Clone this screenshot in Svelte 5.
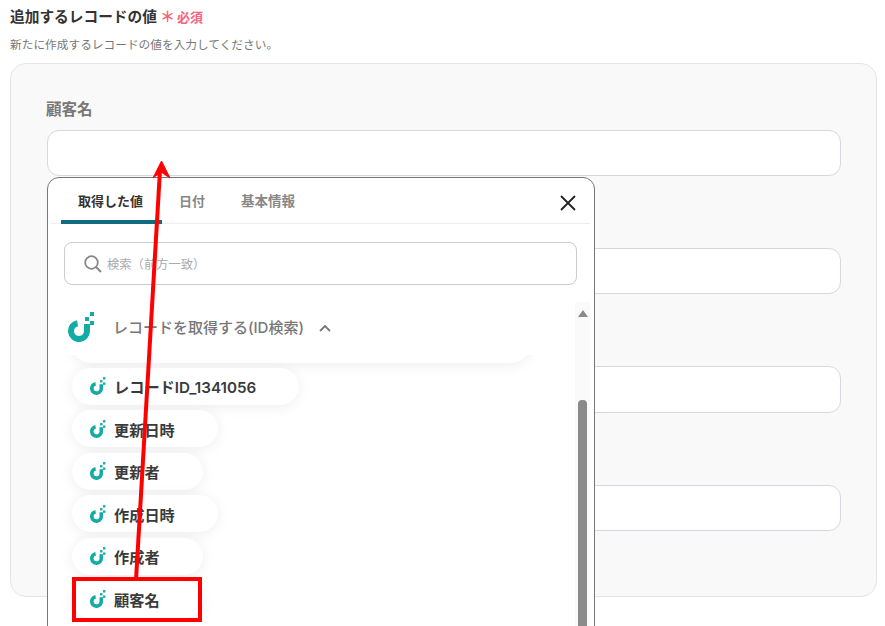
<script>
  const tabs = ['取得した値', '日付', '基本情報'];
  const chips = [
    { label: 'レコードID_1341056' },
    { label: '更新日時' },
    { label: '更新者' },
    { label: '作成日時' },
    { label: '作成者' },
    { label: '顧客名' }
  ];
</script>

{#snippet logo(cls)}
  <svg class={cls} viewBox="0 0 27 30" aria-hidden="true">
    <path d="M9.500 11.200A8 8 0 1 0 19 19V12" fill="none" stroke="currentColor" stroke-width="6" />
    <rect x="22" y="0" width="4" height="4" fill="currentColor" />
    <rect x="17" y="5" width="4" height="4" fill="currentColor" />
    <rect x="22" y="9" width="4" height="4" fill="currentColor" />
  </svg>
{/snippet}

<div class="page">
  <header class="head">
    <h2>追加するレコードの値<span class="req"><span class="star">＊</span>必須</span></h2>
    <p>新たに作成するレコードの値を入力してください。</p>
  </header>

  <section class="panel">
    <div class="label">顧客名</div>
    <div class="fields">
      <div class="input"></div>
      <div class="input"></div>
      <div class="input"></div>
      <div class="input"></div>
    </div>
  </section>

  <div class="popup">
    <div class="tabs">
      {#each tabs as t, i}
        <div class="tab" class:active={i === 0}>{t}</div>
      {/each}
      <svg class="close" viewBox="0 0 16 16" aria-hidden="true">
        <path d="M1 1L15 15M15 1L1 15" stroke="#222" stroke-width="1.8" fill="none" />
      </svg>
    </div>
    <div class="search">
      <svg viewBox="0 0 18 18" aria-hidden="true">
        <circle cx="7.500" cy="7.500" r="6.300" fill="none" stroke="#888" stroke-width="1.8" />
        <path d="M12 12L17 17" stroke="#888" stroke-width="2" fill="none" />
      </svg>
      <span>検索（前方一致）</span>
    </div>
    <div class="body">
      <div class="main">
        <div class="group">
          {@render logo('logo-lg')}
          <span>レコードを取得する(ID検索)</span>
          <svg class="chev" viewBox="0 0 12 8" aria-hidden="true">
            <path d="M1 7L6 2L11 7" fill="none" stroke="#777" stroke-width="1.8" />
          </svg>
        </div>
        <div class="list">
          <div class="chip cut"></div>
          {#each chips as c}
            <div class="chip">
              {@render logo('logo-sm')}
              <span>{c.label}</span>
            </div>
          {/each}
        </div>
      </div>
      <div class="track">
        <div class="up"></div>
        <div class="thumb"></div>
      </div>
    </div>
  </div>

  <div class="mark"></div>
  <svg class="arrow" viewBox="0 0 885 626" aria-hidden="true">
    <path d="M136 580L160 170" stroke="#f00" stroke-width="4" fill="none" />
    <path d="M153 178L161.500 161L170 178L161 172Z" fill="#f00" stroke="#f00" stroke-width="1" />
  </svg>
</div>

<style>
  :global(body) {
    margin: 0;
    background: #fff;
  }
  .page {
    position: relative;
    width: 885px;
    height: 626px;
    overflow: hidden;
    font-family: Inter, "Noto Sans CJK JP", sans-serif;
    color: #333;
  }
  .head {
    padding: 7px 0 0 10px;
  }
  h2 {
    margin: 0;
    font-size: 14.700px;
    line-height: 20px;
    font-weight: 700;
    color: #333;
    display: flex;
    align-items: center;
  }
  .req {
    color: #f4647c;
    font-size: 13px;
    margin-left: 3px;
    display: flex;
    align-items: center;
  }
  .star {
    font-size: 15px;
    width: 17px;
  }
  p {
    margin: 10px 0 0;
    font-size: 11.700px;
    line-height: 17px;
    color: #777;
  }
  .panel {
    box-sizing: border-box;
    margin: 9px 8px 0 10px;
    height: 534px;
    background: #f9f9fa;
    border: 1px solid #e4e5e8;
    border-radius: 16px;
    padding: 34px 35px 0;
  }
  .label {
    font-size: 15.500px;
    line-height: 24px;
    font-weight: 700;
    color: #777;
    margin-bottom: 7.500px;
  }
  .fields {
    display: flex;
    flex-direction: column;
    gap: 71.900px;
    margin-left: 1px;
  }
  .input {
    box-sizing: border-box;
    height: 46.500px;
    background: #fff;
    border: 1px solid #d5d8de;
    border-radius: 12px;
  }
  .popup {
    position: absolute;
    z-index: 1;
    left: 47px;
    top: 177px;
    box-sizing: border-box;
    width: 548px;
    height: 480px;
    background: #fff;
    border: 1px solid #777;
    border-radius: 12px;
    padding: 0 4px 0 3px;
  }
  .tabs {
    position: relative;
    display: flex;
    height: 46px;
    padding-left: 10px;
    border-bottom: 1px solid #eee;
    box-sizing: border-box;
  }
  .tab {
    font-size: 13px;
    line-height: 46px;
    font-weight: 700;
    color: #888;
    padding: 0 17px;
  }
  .tab:last-of-type {
    font-size: 13.500px;
    padding-left: 19px;
  }
  .tab.active {
    color: #333;
    width: 101px;
    box-sizing: border-box;
    border-bottom: 4px solid #0f6b80;
    border-radius: 3px 3px 0 0;
    height: 46px;
  }
  .close {
    position: absolute;
    right: 14px;
    top: 17px;
    width: 16px;
    height: 16px;
  }
  .search {
    box-sizing: border-box;
    margin: 18px 13px 0 13px;
    height: 43px;
    border: 1px solid #ccc;
    border-radius: 8px;
    display: flex;
    align-items: center;
    gap: 5px;
    padding-left: 19px;
    font-size: 12.300px;
    color: #aaa;
  }
  .search svg {
    width: 18px;
    height: 18px;
  }
  .body {
    display: flex;
    margin-top: 17px;
  }
  .main {
    flex: 1;
    min-width: 0;
    height: 400px;
  }
  .group {
    position: relative;
    z-index: 1;
    box-sizing: border-box;
    height: 53px;
    padding: 0 0 4px 17px;
    background: #fff;
    display: flex;
    align-items: center;
    font-size: 15px;
    font-weight: 500;
    color: #777;
  }
  .logo-lg {
    width: 27px;
    height: 30px;
    color: #12aca4;
    margin-right: 18px;
  }
  .chev {
    width: 12px;
    height: 8px;
    margin-left: 15px;
    margin-top: 2px;
  }
  .list {
    display: flex;
    flex-direction: column;
    align-items: flex-start;
    gap: 5.600px;
    padding-left: 21px;
    margin-top: -29px;
  }
  .chip {
    box-sizing: border-box;
    height: 37px;
    min-width: 130px;
    background: #fff;
    border-radius: 19px;
    padding: 0 43px 0 18px;
    display: flex;
    align-items: center;
    gap: 8px;
    font-size: 15.200px;
    font-weight: 600;
    color: #3a3a3a;
    box-shadow: 0 2px 14px rgba(0, 0, 0, 0.07);
  }
  .chip.cut {
    width: 458px;
    margin-bottom: -1px;
  }
  .logo-sm {
    width: 16px;
    height: 18px;
    color: #12aca4;
  }
  .track {
    position: relative;
    width: 15px;
    height: 400px;
    background: #fafafa;
  }
  .up {
    margin: 8px auto 0;
    width: 0;
    height: 0;
    border-left: 5px solid transparent;
    border-right: 5px solid transparent;
    border-bottom: 7px solid #8a8a8a;
  }
  .thumb {
    width: 9px;
    margin: 83px auto 0;
    height: 300px;
    background: #8a8a8a;
    border-radius: 4px 4px 0 0;
  }
  .mark {
    position: absolute;
    z-index: 2;
    left: 72px;
    top: 577px;
    box-sizing: border-box;
    width: 130px;
    height: 45px;
    border: 4px solid #f00;
  }
  .arrow {
    position: absolute;
    z-index: 2;
    inset: 0;
    width: 885px;
    height: 626px;
    pointer-events: none;
  }
</style>
